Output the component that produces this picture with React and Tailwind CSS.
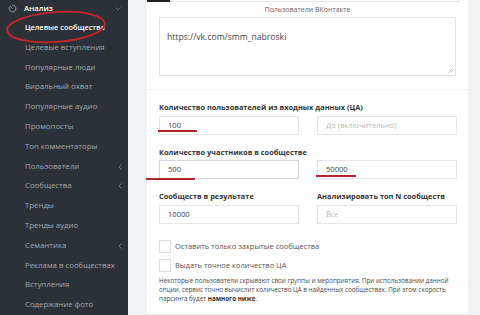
const menu = [
  { label: 'Целевые сообщества', active: true },
  { label: 'Целевые вступления' },
  { label: 'Популярные люди' },
  { label: 'Виральный охват' },
  { label: 'Популярные аудио' },
  { label: 'Промопосты' },
  { label: 'Топ комментаторы' },
  { label: 'Пользователи', sub: true },
  { label: 'Сообщества', sub: true },
  { label: 'Тренды' },
  { label: 'Тренды аудио' },
  { label: 'Семантика', sub: true },
  { label: 'Реклама в сообществах' },
  { label: 'Вступления' },
  { label: 'Содержание фото' },
];

const Sidebar = () => (
  <div className="w-[128px] h-full bg-[#2c3037] flex flex-col shrink-0 overflow-hidden font-['Open_Sans',sans-serif]">
    {/* Анализ group header */}
    <div className="h-[19.6px] flex items-center pl-[8px] pr-[7px] -mt-[1px]">
      <svg width="9" height="9" viewBox="0 0 12 12" fill="none" stroke="#9ea3a9" strokeWidth="1.2" className="mr-[7px]">
        <path d="M6 1.5 A4.5 4.5 0 1 1 2.2 3.6" />
        <path d="M6 6 L3 3" />
      </svg>
      <span className="text-[7.8px] font-semibold text-white flex-grow">Анализ</span>
      <svg width="6" height="4" viewBox="0 0 6 4" fill="none" stroke="#6d737a" strokeWidth="0.9">
        <path d="M0.5 0.5 L3 3 L5.5 0.5" />
      </svg>
    </div>
    <div className="flex flex-col">
      {menu.map(item => (
        <div key={item.label} className="h-[19.8px] flex items-center pl-[25px] pr-[6px]">
          <span className={`flex-grow whitespace-nowrap ${item.active ? 'text-[7.4px] text-white font-semibold' : 'text-[7.8px] text-[#a3a8ae]'}`}>
            {item.label}
          </span>
          {item.sub && (
            <svg width="4" height="6" viewBox="0 0 4 6" fill="none" stroke="#7b8187" strokeWidth="0.9">
              <path d="M3.5 0.5 L1 3 L3.5 5.5" />
            </svg>
          )}
        </div>
      ))}
    </div>
  </div>
);

const Field = ({ value, placeholder, serif, strong }) => (
  <div className={`h-[19px] bg-white border flex items-center px-[8px] ${strong ? 'border-[#d6d6d6]' : 'border-[#e6e6e6]'}`}>
    {value ? (
      <span className="text-[7.6px] text-[#444]">{value}</span>
    ) : (
      <span className={`text-[7.6px] text-[#b8b8b8] ${serif ? "font-['Liberation_Serif',serif]" : ''}`}>{placeholder}</span>
    )}
  </div>
);

const Check = ({ label }) => (
  <div className="flex items-center">
    <div className="w-[12px] h-[13px] border border-[#dcdcdc] bg-white mr-[4px]" />
    <span className="text-[7.5px] text-[#555]">{label}</span>
  </div>
);

const Label = ({ children }) => (
  <div className="text-[7.4px] leading-[12px] font-bold text-[#333] whitespace-nowrap">{children}</div>
);

const Card = () => (
  <div className="bg-white w-[321px] h-[313px] flex flex-col shrink-0 font-['Open_Sans',sans-serif]">
    <div className="h-[2px] flex">
      <div className="w-[23px] bg-[#222]" />
      <div className="flex-grow mr-[8px] border-b border-r border-[#e2e2e2]" />
    </div>
    <div className="mt-[3px] text-center text-[7px] leading-[10px] text-[#666]">Пользователи ВКонтакте</div>
    <div className="mx-[12px] mt-[2px] h-[59px] border border-[#e2e2e2] relative px-[7px] pt-[4px]">
      <span className="text-[8.6px] text-[#444]">https://vk.com/smm_nabroski</span>
      <svg width="5" height="5" viewBox="0 0 5 5" stroke="#999" strokeWidth="0.7" className="absolute right-[2px] bottom-[2px]">
        <path d="M0.5 4.5 L4.5 0.5 M2.5 4.5 L4.5 2.5" />
      </svg>
    </div>
    <div className="mt-[13px] h-px bg-[#efefef]" />

    <div className="pl-[12px] pr-[11px] flex flex-col">
      <div className="mt-[11px]">
        <Label>Количество пользователей из входных данных (ЦА)</Label>
      </div>
      <div className="mt-[3px] grid grid-cols-2 gap-[18px]">
        <Field value="100" />
        <Field placeholder="До (включительно)" />
      </div>

      <div className="mt-[11px]">
        <Label>Количество участников в сообществе</Label>
      </div>
      <div className="mt-[2px] grid grid-cols-2 gap-[18px]">
        <Field value="500" strong />
        <Field value="50000" />
      </div>

      <div className="mt-[11px] grid grid-cols-2 gap-[18px]">
        <Label>Сообществ в результате</Label>
        <Label>Анализировать топ N сообществ</Label>
      </div>
      <div className="mt-[3px] grid grid-cols-2 gap-[18px]">
        <Field value="10000" />
        <Field placeholder="Все" serif />
      </div>

      <div className="mt-[16px]">
        <Check label="Оставить только закрытые сообщества" />
      </div>
      <div className="mt-[6px]">
        <Check label="Выдать точное количество ЦА" />
      </div>
      <p className="mt-[4px] text-[6.3px] leading-[9px] text-[#4a4a4a] whitespace-nowrap">
        Некоторые пользователи скрывают свои группы и мероприятия. При использовании данной
        <br />
        опции, сервис точно вычислит количество ЦА в найденных сообществах. При этом скорость
        <br />
        парсинга будет <b className="text-[#333]">намного ниже</b>.
      </p>
    </div>
  </div>
);

const App = () => (
  <div className="relative w-[480px] h-[315px] overflow-hidden flex bg-[#eef0f2]">
    <Sidebar />
    <div className="w-[352px] shrink-0 pl-[19px] pr-[12px] bg-[#f0f1f3]">
      <Card />
    </div>

    {/* red hand-drawn annotations */}
    <svg width="480" height="315" className="absolute left-0 top-0 pointer-events-none">
      <ellipse cx="56" cy="27" rx="49" ry="15" transform="rotate(-4 56 27)" fill="none" stroke="#c4262c" strokeWidth="1.8" />
      <path d="M158 131 L197 131" stroke="#b5232a" strokeWidth="2" />
      <path d="M146 179 L195 179" stroke="#b5232a" strokeWidth="2" />
      <path d="M316 176 L356 176" stroke="#b5232a" strokeWidth="2" />
    </svg>
  </div>
);

export default App;
